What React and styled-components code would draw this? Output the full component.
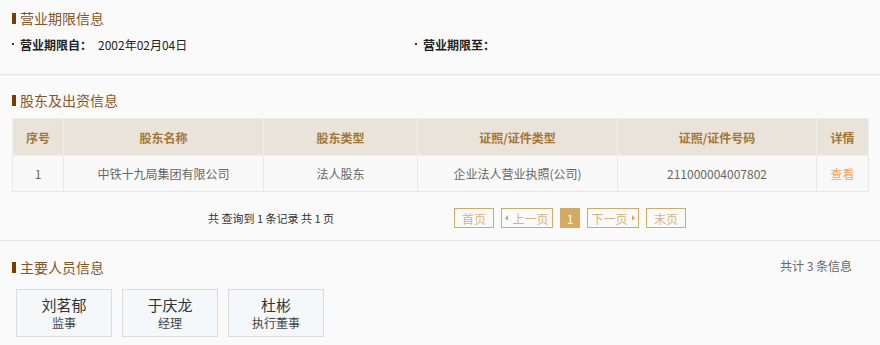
import React from "react";
import styled, { createGlobalStyle } from "styled-components";

const Global = createGlobalStyle`
  html, body { margin: 0; padding: 0; background: #fafafa; }
  body { font-family: "Microsoft YaHei", "Noto Sans CJK SC", "Noto Sans", sans-serif; font-size: 12px; color: #333; }
`;

const Page = styled.div`
  width: 880px;
  background: #fafafa;
`;

const Section = styled.section`
  padding: ${(p) => p.$pad};
  border-bottom: ${(p) => (p.$last ? "none" : "1px solid #e6e6e6")};
`;

const TitleRow = styled.div`
  display: flex;
  align-items: center;
  justify-content: space-between;
  height: 20px;
`;

const Title = styled.h3`
  margin: 0;
  display: flex;
  align-items: center;
  font-size: 14px;
  font-weight: normal;
  color: #8a5526;
  line-height: 20px;
  &::before {
    content: "";
    display: block;
    width: 4px;
    height: 11px;
    background: #7b3f00;
    margin-right: 4px;
  }
`;

const Count = styled.span`
  font-size: 12px;
  color: #666;
  margin-right: 16px;
  margin-top: -4px;
`;

const InfoGrid = styled.div`
  display: grid;
  grid-template-columns: 403px 1fr;
  margin-top: 7px;
  line-height: 20px;
`;

const InfoItem = styled.div`
  display: flex;
  align-items: center;
`;

const Dot = styled.span`
  width: 2px;
  height: 2px;
  background: #333;
  margin: 0 6px 2px 0;
`;

const Label = styled.span`
  font-weight: bold;
  color: #222;
  width: 78px;
`;

const Value = styled.span`
  color: #222;
`;

const Table = styled.table`
  margin-top: 8px;
  width: 856px;
  border-collapse: collapse;
  table-layout: fixed;
`;

const Th = styled.th`
  height: 36px;
  background: #e9e3d9;
  color: #a27636;
  font-weight: bold;
  font-size: 12px;
  border: 1px solid #f2efea;
  padding: 0;
`;

const Td = styled.td`
  height: 35px;
  text-align: center;
  color: ${(p) => (p.$link ? "#f7a35a" : "#666")};
  border: 1px solid #e8e8e8;
  background: #f9f9f9;
  padding: 0;
`;

const Pager = styled.div`
  display: flex;
  align-items: center;
  margin-top: 16px;
  height: 20px;
`;

const PageInfo = styled.div`
  width: 442px;
  box-sizing: border-box;
  padding-left: 196px;
  color: #333;
  font-size: 11px;
  white-space: pre;
`;

const Buttons = styled.div`
  display: flex;
  gap: 7px;
`;

const PageBtn = styled.span`
  box-sizing: border-box;
  width: ${(p) => p.$w}px;
  height: 20px;
  display: flex;
  align-items: center;
  justify-content: center;
  gap: 4px;
  border: 1px solid #d4aa63;
  background: ${(p) => (p.$active ? "#d4aa63" : "transparent")};
  color: ${(p) => (p.$active ? "#fff" : "#d8b478")};
  font-size: 12px;
`;

const Tri = styled.span`
  width: 0;
  height: 0;
  border-top: 3px solid transparent;
  border-bottom: 3px solid transparent;
  ${(p) => (p.$dir === "left" ? "border-right: 3px solid #d4aa63;" : "border-left: 3px solid #d4aa63;")}
`;

const Cards = styled.div`
  display: flex;
  gap: 10px;
  margin: 12px 0 0 4px;
`;

const Card = styled.div`
  box-sizing: border-box;
  width: 96px;
  height: 48px;
  border: 1px solid #dcdcdc;
  background: #f5f8fa;
  display: flex;
  flex-direction: column;
  align-items: center;
  justify-content: center;
`;

const Name = styled.div`
  font-size: 15px;
  line-height: 18px;
  color: #333;
`;

const Role = styled.div`
  font-size: 12px;
  line-height: 17px;
  color: #444;
`;

const cols = [51, 200, 154, 200, 199, 52];
const heads = ["序号", "股东名称", "股东类型", "证照/证件类型", "证照/证件号码", "详情"];
const people = [
  ["刘茗郁", "监事"],
  ["于庆龙", "经理"],
  ["杜彬", "执行董事"],
];

export default function App() {
  return (
    <Page>
      <Global />
      <Section $pad="8px 12px 19px">
        <TitleRow>
          <Title>营业期限信息</Title>
        </TitleRow>
        <InfoGrid>
          <InfoItem>
            <Dot />
            <Label>营业期限自：</Label>
            <Value>2002年02月04日</Value>
          </InfoItem>
          <InfoItem>
            <Dot />
            <Label>营业期限至：</Label>
            <Value></Value>
          </InfoItem>
        </InfoGrid>
      </Section>
      <Section $pad="15px 12px 12px">
        <TitleRow>
          <Title>股东及出资信息</Title>
        </TitleRow>
        <Table>
          <colgroup>
            {cols.map((w, i) => (
              <col key={i} style={{ width: w }} />
            ))}
          </colgroup>
          <thead>
            <tr>
              {heads.map((h) => (
                <Th key={h}>{h}</Th>
              ))}
            </tr>
          </thead>
          <tbody>
            <tr>
              <Td>1</Td>
              <Td>中铁十九局集团有限公司</Td>
              <Td>法人股东</Td>
              <Td>企业法人营业执照(公司)</Td>
              <Td>211000004007802</Td>
              <Td $link>查看</Td>
            </tr>
          </tbody>
        </Table>
        <Pager>
          <PageInfo>共 查询到 1 条记录 共 1 页</PageInfo>
          <Buttons>
            <PageBtn $w={40}>首页</PageBtn>
            <PageBtn $w={52}>
              <Tri $dir="left" />
              上一页
            </PageBtn>
            <PageBtn $w={20} $active>
              1
            </PageBtn>
            <PageBtn $w={52}>
              下一页
              <Tri $dir="right" />
            </PageBtn>
            <PageBtn $w={40}>末页</PageBtn>
          </Buttons>
        </Pager>
      </Section>
      <Section $pad="16px 12px 10px" $last>
        <TitleRow>
          <Title>主要人员信息</Title>
          <Count>共计 3 条信息</Count>
        </TitleRow>
        <Cards>
          {people.map(([n, r]) => (
            <Card key={n}>
              <Name>{n}</Name>
              <Role>{r}</Role>
            </Card>
          ))}
        </Cards>
      </Section>
    </Page>
  );
}
